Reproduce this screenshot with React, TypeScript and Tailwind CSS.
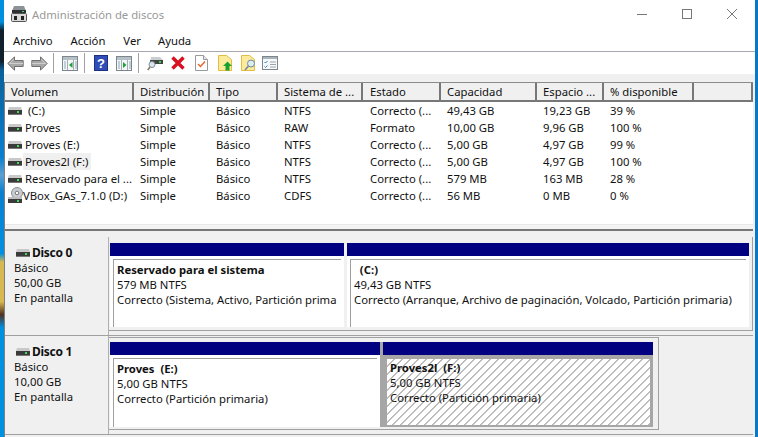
const font = 'font-["Noto_Sans",sans-serif] text-[11.3px] leading-[15px] text-[#111]';

const columns = [
  { label: 'Volumen', w: 'w-[129px]', pl: 'pl-[6px]' },
  { label: 'Distribución', w: 'w-[76px]', pl: 'pl-[6px]' },
  { label: 'Tipo', w: 'w-[68px]', pl: 'pl-[6px]' },
  { label: 'Sistema de ...', w: 'w-[85px]', pl: 'pl-[6px]' },
  { label: 'Estado', w: 'w-[78px]', pl: 'pl-[7px]' },
  { label: 'Capacidad', w: 'w-[96px]', pl: 'pl-[6px]' },
  { label: 'Espacio ...', w: 'w-[67px]', pl: 'pl-[6px]' },
  { label: '% disponible', w: 'w-[90px]', pl: 'pl-[6px]' },
  { label: '', w: 'flex-1', pl: '' },
];

const rows = [
  ['\u00a0(C:)', 'Simple', 'Básico', 'NTFS', 'Correcto (...', '49,43 GB', '19,23 GB', '39 %'],
  ['Proves', 'Simple', 'Básico', 'RAW', 'Formato', '10,00 GB', '9,96 GB', '100 %'],
  ['Proves (E:)', 'Simple', 'Básico', 'NTFS', 'Correcto (...', '5,00 GB', '4,97 GB', '99 %'],
  ['Proves2l (F:)', 'Simple', 'Básico', 'NTFS', 'Correcto (...', '5,00 GB', '4,97 GB', '100 %'],
  ['Reservado para el ...', 'Simple', 'Básico', 'NTFS', 'Correcto (...', '579 MB', '163 MB', '28 %'],
  ['VBox_GAs_7.1.0 (D:)', 'Simple', 'Básico', 'CDFS', 'Correcto (...', '56 MB', '0 MB', '0 %'],
];

function DriveIcon() {
  return (
    <svg width="14" height="8" viewBox="0 0 14 8" className="shrink-0">
      <path d="M1 0h12l1 3H0z" fill="#c9c9c9" />
      <rect x="0" y="3" width="14" height="5" fill="#3b3b3b" />
      <rect x="0" y="7" width="14" height="1" fill="#777" />
      <rect x="9" y="4" width="2" height="2" fill="#3ddc5a" />
    </svg>
  );
}

function CdIcon() {
  return (
    <svg width="15" height="17" viewBox="0 0 15 17" className="shrink-0">
      <circle cx="9" cy="6" r="5.500" fill="#c9cdd1" stroke="#8a8e92" />
      <circle cx="9" cy="6" r="1.800" fill="#fff" stroke="#777" />
      <path d="M0 10h14v2H0z" fill="#bdbdbd" />
      <rect x="0" y="12" width="14" height="4" fill="#3b3b3b" />
      <rect x="9" y="13" width="2" height="2" fill="#3ddc5a" />
    </svg>
  );
}

function AppIcon() {
  return (
    <svg width="16" height="16" viewBox="0 0 16 16">
      <path d="M3 0h10l2 5H1z" fill="#8d9296" />
      <rect x="1" y="4" width="14" height="3" fill="#2c2f33" />
      <rect x="11" y="5" width="2" height="1" fill="#3ddc5a" />
      <rect x=".5" y="7.500" width="15" height="8" rx="1" fill="#d9d9d9" stroke="#555" />
      <rect x="3" y="10" width="3" height="4" fill="#222" />
      <rect x="10" y="10" width="3" height="4" fill="#222" />
    </svg>
  );
}

function Arrow({ flip }: { flip?: boolean }) {
  return (
    <svg width="17" height="15" viewBox="0 0 17 15" className={flip ? 'scale-x-[-1]' : ''}>
      <path d="M7.500 .8.800 7.500l6.700 6.700V10.500h8.700v-6H7.500z" fill="#a8a8a8" stroke="#707070" />
      <path d="M7 3 2.500 7.500H16" fill="none" stroke="#cfcfcf" />
    </svg>
  );
}

function PaneIcon({ right }: { right?: boolean }) {
  return (
    <svg width="16" height="15" viewBox="0 0 16 15">
      <rect x=".5" y=".5" width="15" height="14" fill="#f4f6f7" stroke="#7d868c" />
      <rect x="1" y="1" width="14" height="3" fill="#b6c0c7" />
      <path d="M5.500 4v10M11.500 4v10" stroke="#a4adb3" />
      <path d="M2 6h2M2 8h2M2 10h2M2 12h2M13 6h2M13 8h2M13 10h2M13 12h2" stroke="#8fa8bb" />
      {right ? <path d="M7 6l3.500 3L7 12z" fill="#1fa13a" /> : <path d="M10.500 6 7 9l3.500 3z" fill="#1fa13a" />}
    </svg>
  );
}

function HelpIcon() {
  return (
    <svg width="14" height="16" viewBox="0 0 14 16">
      <rect x=".5" y=".5" width="13" height="15" fill="#2f4db5" stroke="#1c2f80" />
      <text x="7" y="13" textAnchor="middle" fontSize="13" fontWeight="700" fill="#fff" fontFamily="Liberation Sans">?</text>
    </svg>
  );
}

function DiskSearchIcon() {
  return (
    <svg width="16" height="15" viewBox="0 0 16 15">
      <path d="M4 1h9l3 3v4H3z" fill="#c9ced2" />
      <rect x="3" y="4" width="13" height="4" fill="#444" />
      <rect x="12" y="5" width="2" height="2" fill="#35d04f" />
      <circle cx="5" cy="8.500" r="3" fill="#dbe6ee" stroke="#7a8a96" />
      <path d="M3 11 .8 14" stroke="#8d7b60" strokeWidth="1.600" />
    </svg>
  );
}

function RedX() {
  return (
    <svg width="14" height="14" viewBox="0 0 14 14">
      <path d="M1.500 1.500l11 11M12.500 1.500l-11 11" stroke="#d81020" strokeWidth="3.400" />
    </svg>
  );
}

function DocCheck() {
  return (
    <svg width="13" height="16" viewBox="0 0 13 16">
      <path d="M.5.5h8l4 4v11H.5z" fill="#fff" stroke="#9a9a9a" />
      <path d="M8.500.5v4h4" fill="#e6e6e6" stroke="#9a9a9a" />
      <path d="M3 9l2.500 2.500L10 6.500" fill="none" stroke="#e8622c" strokeWidth="1.400" />
    </svg>
  );
}

function FolderUp() {
  return (
    <svg width="14" height="16" viewBox="0 0 14 16">
      <path d="M.5.5h8l5 4v11H.5z" fill="#fdeb9c" stroke="#e2bd45" />
      <path d="M9.500 6.500 14 11h-2.500v4.500h-4V11H5z" fill="#19a32c" />
    </svg>
  );
}

function FolderSearch() {
  return (
    <svg width="15" height="16" viewBox="0 0 15 16">
      <path d="M.5.5h8l5 4v11H.5z" fill="#fdeb9c" stroke="#e2bd45" />
      <circle cx="10" cy="8.500" r="3.500" fill="#dcecf5" stroke="#6f8ba0" />
      <path d="M7.500 11 4 15" stroke="#7b8a94" strokeWidth="1.600" />
    </svg>
  );
}

function ListCheck() {
  return (
    <svg width="16" height="14" viewBox="0 0 16 14">
      <rect x=".5" y=".5" width="15" height="13" fill="#f6f8fa" stroke="#7d868c" />
      <rect x="1" y="1" width="14" height="2" fill="#aab4bb" />
      <path d="M2.500 6l1 1 2-2M2.500 10.500l1 1 2-2" fill="none" stroke="#2a7fd0" />
      <path d="M8 6h6M8 8.500h6M8 11h6" stroke="#9aa4aa" />
    </svg>
  );
}

function Sep() {
  return <div className="h-[20px] w-px bg-[#a0a0a0]" />;
}

function HeaderRow() {
  return (
    <div className="flex h-[20px] shrink-0 border-t border-[#8a8a8a] bg-[#f0f0f0]">
      {columns.map((c) => (
        <div
          key={c.label}
          className={`${c.w} ${c.pl} truncate border-r-2 border-b-2 border-r-[#777] border-b-[#777] pt-[1px] leading-[15px]`}
        >
          {c.label}
        </div>
      ))}
    </div>
  );
}

function TableRow({ row, index }: { row: string[]; index: number }) {
  return (
    <div className="flex h-[17px] items-center">
      {row.map((cell, i) => (
        <div key={i} className={`${columns[i].w} ${columns[i].pl} shrink-0 whitespace-nowrap`}>
          {i === 0 ? (
            <div className="-ml-[3px] flex items-center">
              {index === 5 ? <CdIcon /> : <DriveIcon />}
              <span className={`${index === 5 ? '' : 'ml-[1px] pl-[2px]'} pr-[3px] leading-[17px] ${index === 3 ? 'bg-[#f0f0f0]' : ''}`}>{cell}</span>
            </div>
          ) : (
            cell
          )}
        </div>
      ))}
    </div>
  );
}

function DiskLabel({ name, size }: { name: string; size: string }) {
  return (
    <div className="w-[102px] shrink-0 bg-[#f0f0f0] pl-[9px] pt-[8px]">
      <div className="flex items-center gap-[2px] pl-[2px] text-[12px] font-bold tracking-[-0.3px]">
        <DriveIcon />
        {name}
      </div>
      <div>Básico</div>
      <div>{size}</div>
      <div>En pantalla</div>
    </div>
  );
}

function Partition({ title, size, status, w, h, hatched }: { title: string; size: string; status: string; w: string; h: string; hatched?: boolean }) {
  return (
    <div className={`${w} shrink-0`}>
      <div className="h-[13px] bg-[#000080]" />
      {hatched ? (
        <div className={`${h} border-t-4 border-r-3 border-b-2 border-l-4 border-[#a6a6a6]`}>
          <div className="h-full overflow-hidden bg-[repeating-linear-gradient(135deg,#fff_0,#fff_4.660px,#bcbcbc_4.660px,#bcbcbc_5.660px)] pl-[3px] pt-[1px]">
            <div className="font-bold">{title}</div>
            <div>{size}</div>
            <div className="whitespace-nowrap">{status}</div>
          </div>
        </div>
      ) : (
        <div className={`${h} bg-white px-[3px] pt-[3px]`}>
          <div className="h-full overflow-hidden border-t border-l border-[#a0a0a0] pl-[3px] pt-[2px]">
            <div className="font-bold">{title}</div>
            <div>{size}</div>
            <div className="whitespace-nowrap">{status}</div>
          </div>
        </div>
      )}
    </div>
  );
}

export default function App() {
  return (
    <div className={`flex h-[437px] w-[758px] overflow-hidden bg-white ${font}`}>
      <div className="w-[4px] shrink-0 bg-[linear-gradient(#0090e0_0,#0090e0_5%,#10202c_7%,#10202c_14%,#0a5f9a_16%,#0a7fd0_36%,#5f9fd0_40%,#0a7fd0_44%,#0090e0_58%,#d8b850_60%,#d8b850_69%,#503020_72%,#0090e0_75%,#0090e0_100%)]" />
      <div className="flex min-w-0 flex-1 flex-col">
        <div className="flex h-[30px] shrink-0 items-center pb-[2px] pl-[7px]">
          <AppIcon />
          <span className="ml-[5px] text-[#999]">Administración de discos</span>
          <div className="ml-auto flex items-center">
            <div className="mr-[35px] h-px w-[10px] bg-[#777]" />
            <div className="mr-[35px] size-[10px] border border-[#777]" />
            <svg width="10" height="10" viewBox="0 0 10 10" className="mr-[18px]">
              <path d="M0 0l10 10M10 0 0 10" stroke="#777" />
            </svg>
          </div>
        </div>
        <div className="flex h-[21px] shrink-0 items-center gap-[17px] pl-[9px]">
          <span className="mr-[1px]">Archivo</span>
          <span className="mr-[1px]">Acción</span>
          <span>Ver</span>
          <span>Ayuda</span>
        </div>
        <div className="flex h-[23px] shrink-0 items-center border-t border-[#a9a9b0] pl-[3px]">
          <Arrow />
          <div className="ml-[7px]"><Arrow flip /></div>
          <div className="ml-[5px]"><Sep /></div>
          <div className="ml-[8px]"><PaneIcon /></div>
          <div className="ml-[6px]"><Sep /></div>
          <div className="ml-[9px]"><HelpIcon /></div>
          <div className="ml-[8px]"><PaneIcon right /></div>
          <div className="ml-[6px]"><Sep /></div>
          <div className="ml-[8px]"><DiskSearchIcon /></div>
          <div className="ml-[8px]"><RedX /></div>
          <div className="ml-[10px]"><DocCheck /></div>
          <div className="ml-[10px]"><FolderUp /></div>
          <div className="ml-[9px]"><FolderSearch /></div>
          <div className="ml-[6px]"><ListCheck /></div>
        </div>
        <div className="h-[8px] shrink-0 bg-[#f0f0f0]" />
        <div className="flex min-h-0 flex-1 flex-col bg-[#f0f0f0] pr-[2px]">
          <div className="flex min-h-0 flex-1 flex-col border-l border-[#808080]">
            <HeaderRow />
            <div className="flex h-[122px] shrink-0 flex-col bg-white">
              {rows.map((row, i) => (
                <TableRow key={row[0]} row={row} index={i} />
              ))}
            </div>
            <div className="h-[7px] shrink-0 border-t border-b-2 border-t-[#e8e8e8] border-b-[#777] bg-[#f4f4f4]" />
            <div className="flex-1 pt-[6px]">
              <div className="flex h-[99px] border-b border-[#a0a0a0]">
                <DiskLabel name="Disco 0" size="50,00 GB" />
                <div className="w-[2px] shrink-0 border-r border-[#b0b0b0]" />
                <div className="flex h-[94px] flex-1 gap-[3px] border-r border-b border-[#a0a0a0] pl-[1px] pt-[6px]">
                  <Partition w="w-[234px]" h="h-[71px]" title="Reservado para el sistema" size="579 MB NTFS" status="Correcto (Sistema, Activo, Partición prima" />
                  <Partition w="w-[402px]" h="h-[71px]" title={'\u00a0\u00a0(C:)'} size="49,43 GB NTFS" status="Correcto (Arranque, Archivo de paginación, Volcado, Partición primaria)" />
                </div>
              </div>
              <div className="flex h-[99px] border-b border-[#a0a0a0]">
                <DiskLabel name="Disco 1" size="10,00 GB" />
                <div className="w-[2px] shrink-0 border-r border-[#b0b0b0]" />
                <div className="mt-[1px] flex h-[93px] w-[550px] border-t border-r border-b border-[#a0a0a0] pl-[1px] pt-[4px]">
                  <Partition w="w-[270px]" h="h-[72px]" title={'Proves\u00a0 (E:)'} size="5,00 GB NTFS" status="Correcto (Partición primaria)" />
                  <div className="h-[85px] w-[3px] bg-[#a6a6a6]" />
                  <Partition w="w-[270px]" h="h-[72px]" hatched title={'Proves2l\u00a0 (F:)'} size="5,00 GB NTFS" status="Correcto (Partición primaria)" />
                </div>
              </div>
            </div>
          </div>
        </div>
      </div>
      <div className="w-[3px] shrink-0 bg-[#0a78c8]" />
    </div>
  );
}
